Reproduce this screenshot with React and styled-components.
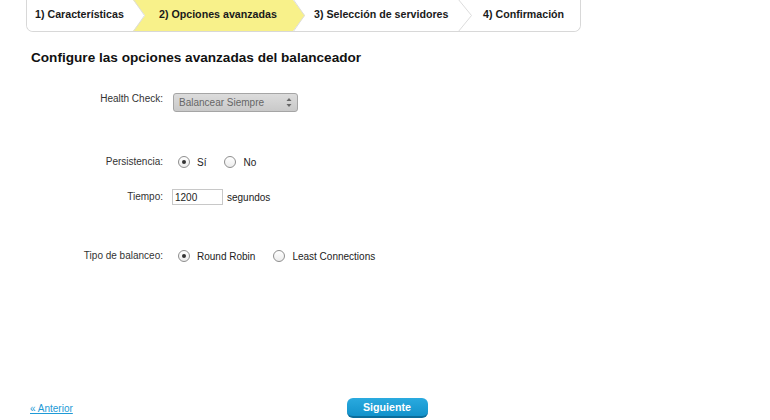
import React from 'react';
import styled, { createGlobalStyle } from 'styled-components';

const Global = createGlobalStyle`
  html, body { margin: 0; padding: 0; background: #fff; }
  body { font-family: "Liberation Sans", Arial, sans-serif; color: #222; }
`;

const Page = styled.div`
  height: 420px;
  display: flex;
  flex-direction: column;
  overflow: hidden;
`;

const Steps = styled.nav`
  display: flex;
  margin-left: 26px;
  width: 555px;
  height: 32px;
  box-sizing: border-box;
  border: 1px solid #d8d8d8;
  border-top: none;
  border-radius: 0 0 7px 7px;
  overflow: hidden;
  background: #fff;
`;

const Step = styled.div`
  flex: 0 0 ${(p) => p.$w}px;
  display: flex;
  align-items: center;
  box-sizing: border-box;
  padding-left: ${(p) => p.$pl}px;
  padding-bottom: 4px;
  background: ${(p) => (p.$active ? '#f8f18a' : '#fff')};
  font-weight: bold;
  font-size: 10.67px;
  color: #1a1a1a;
  white-space: nowrap;
`;

const SepSvg = styled.svg`
  flex: 0 0 ${(p) => p.$w}px;
  display: block;
`;

const Sep = ({ w, left, right }) => (
  <SepSvg $w={w} width={w} height={31} viewBox={`0 0 ${w} 31`}>
    <rect x="0" y="0" width={w} height="31" fill={right} />
    <polygon points={`0,0 ${w},15.5 0,31`} fill={left} />
    <polyline points={`0,-1 ${w - 0.5},15.5 0,32`} fill="none" stroke="#dcdcdc" strokeWidth="1" />
  </SepSvg>
);

const Heading = styled.h1`
  margin: 18px 0 0 31px;
  font-size: 13.6px;
  line-height: 16px;
  font-weight: bold;
  color: #111;
`;

const Row = styled.div`
  display: grid;
  grid-template-columns: 163px auto;
  column-gap: 9px;
  align-items: ${(p) => p.$align || 'center'};
  margin-top: ${(p) => p.$mt}px;
`;

const Label = styled.div`
  text-align: right;
  font-size: 10px;
  line-height: 12px;
  color: #333;
`;

const Controls = styled.div`
  display: flex;
  align-items: center;
  font-size: 10px;
  color: #222;
`;

const Select = styled.div`
  margin-left: 1px;
  width: 125px;
  height: 19px;
  box-sizing: border-box;
  border: 1px solid #a5a5a5;
  border-radius: 3px;
  background: linear-gradient(#dcdcdc, #c9c9c9);
  display: flex;
  align-items: center;
  justify-content: space-between;
  padding: 0 5px 0 5px;
  font-size: 10px;
  color: #666;
`;

const Option = styled.label`
  display: flex;
  align-items: center;
  margin-right: 12px;
`;

const Radio = styled.span`
  position: relative;
  width: 12px;
  height: 12px;
  box-sizing: border-box;
  border: 1px solid #8e8e8e;
  border-radius: 50%;
  background: linear-gradient(#ffffff, #ececec);
  margin: 0 7px 0 6px;
  &::after {
    content: '';
    display: ${(p) => (p.$checked ? 'block' : 'none')};
    position: absolute;
    left: 3px;
    top: 3px;
    width: 4px;
    height: 4px;
    border-radius: 50%;
    background: #333;
  }
`;

const Input = styled.input`
  width: 51px;
  height: 16px;
  box-sizing: border-box;
  border: 1px solid #c8c8c8;
  padding: 0 2px;
  font-family: "Liberation Sans", Arial, sans-serif;
  font-size: 10px;
  color: #222;
  outline: none;
`;

const Unit = styled.span`
  margin-left: 4px;
`;

const Spacer = styled.div`
  flex: 1;
`;

const Footer = styled.div`
  display: grid;
  grid-template-columns: 1fr auto 1fr;
  align-items: center;
  padding: 0 26px 2px 30px;
`;

const BackLink = styled.a`
  justify-self: start;
  font-size: 10px;
  color: #1e9ad6;
  text-decoration: underline;
  cursor: pointer;
`;

const NextButton = styled.button`
  width: 81px;
  height: 20px;
  box-sizing: border-box;
  border: none;
  border-bottom: 2px solid #0b6d9b;
  border-radius: 6px;
  background: linear-gradient(#2aaadf, #1292cb);
  color: #fff;
  font-family: "Liberation Sans", Arial, sans-serif;
  font-weight: bold;
  font-size: 10.67px;
  padding: 0;
  cursor: pointer;
`;

const Arrows = () => (
  <svg width="6" height="11" viewBox="0 0 6 11">
    <polygon points="3,1 5.5,4 0.5,4" fill="#666" />
    <polygon points="3,10 5.5,7 0.5,7" fill="#666" />
  </svg>
);

export default function App() {
  return (
    <Page>
      <Global />
      <Steps>
        <Step $w={106} $pl={8}>1) Características</Step>
        <Sep w={12} left="#fff" right="#f8f18a" />
        <Step $w={148} $pl={14} $active>2) Opciones avanzadas</Step>
        <Sep w={12} left="#f8f18a" right="#fff" />
        <Step $w={153} $pl={9}>3) Selección de servidores</Step>
        <Sep w={14} left="#fff" right="#fff" />
        <Step $w={108} $pl={11}>4) Confirmación</Step>
      </Steps>

      <Heading>Configure las opciones avanzadas del balanceador</Heading>

      <Row $mt={27} $align="start">
        <Label>Health Check:</Label>
        <Controls>
          <Select>
            <span>Balancear Siempre</span>
            <Arrows />
          </Select>
        </Controls>
      </Row>

      <Row $mt={44}>
        <Label>Persistencia:</Label>
        <Controls>
          <Option><Radio $checked />Sí</Option>
          <Option><Radio />No</Option>
        </Controls>
      </Row>

      <Row $mt={21}>
        <Label>Tiempo:</Label>
        <Controls>
          <Input defaultValue="1200" />
          <Unit>segundos</Unit>
        </Controls>
      </Row>

      <Row $mt={45}>
        <Label>Tipo de balanceo:</Label>
        <Controls>
          <Option><Radio $checked />Round Robin</Option>
          <Option><Radio />Least Connections</Option>
        </Controls>
      </Row>

      <Spacer />

      <Footer>
        <BackLink>« Anterior</BackLink>
        <NextButton>Siguiente</NextButton>
      </Footer>
    </Page>
  );
}
